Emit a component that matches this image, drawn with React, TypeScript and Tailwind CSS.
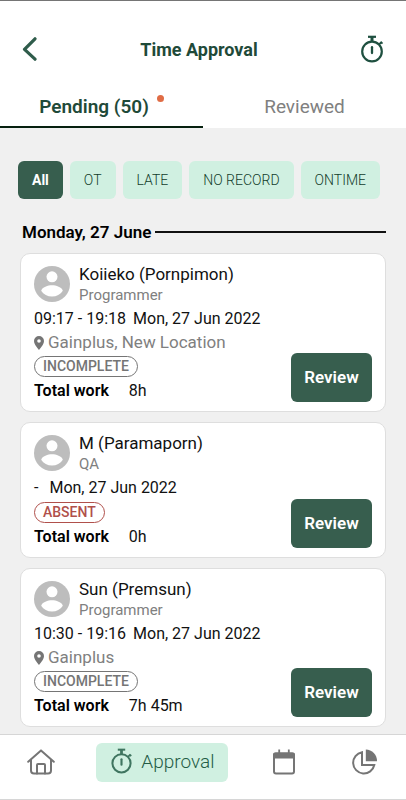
import React from "react";

type Status = "INCOMPLETE" | "ABSENT";

interface Entry {
  name: string;
  role: string;
  time: string;
  date: string;
  location?: string;
  status: Status;
  total: string;
}

const filters = ["All", "OT", "LATE", "NO RECORD", "ONTIME"];

const entries: Entry[] = [
  {
    name: "Koiieko (Pornpimon)",
    role: "Programmer",
    time: "09:17 - 19:18",
    date: "Mon, 27 Jun 2022",
    location: "Gainplus, New Location",
    status: "INCOMPLETE",
    total: "8h",
  },
  {
    name: "M (Paramaporn)",
    role: "QA",
    time: "-",
    date: "Mon, 27 Jun 2022",
    status: "ABSENT",
    total: "0h",
  },
  {
    name: "Sun (Premsun)",
    role: "Programmer",
    time: "10:30 - 19:16",
    date: "Mon, 27 Jun 2022",
    location: "Gainplus",
    status: "INCOMPLETE",
    total: "7h 45m",
  },
];

function StopwatchIcon({ className }: { className: string }) {
  return (
    <svg className={className} viewBox="0 0 24 28" fill="none" stroke="currentColor" aria-hidden="true">
      <circle cx="12" cy="16.5" r="9.8" strokeWidth="2.2" />
      <path d="M8 1.8h8" strokeWidth="2.2" />
      <path d="M12 2v4.5" strokeWidth="3" />
      <path d="M12 12.2v5.8" strokeWidth="2.3" strokeLinecap="round" />
      <path d="M19 9.5l2.400-2.400M20.500 6.800l2 1.800" strokeWidth="1.900" />
    </svg>
  );
}

function AvatarIcon() {
  return (
    <svg className="shrink-0" width="36" height="36" viewBox="0 0 36 36" aria-hidden="true">
      <circle cx="18" cy="18" r="18" fill="#bdbdbd" />
      <circle cx="18" cy="10.8" r="5.5" fill="#fff" />
      <path d="M7.2 24.8C8 21 14 19.2 18 19.2s10 1.8 10.8 5.6C26.500 28.600 22.500 30.600 18 30.600S9.500 28.600 7.200 24.800z" fill="#fff" />
    </svg>
  );
}

function PinIcon() {
  return (
    <svg className="shrink-0" width="10" height="14" viewBox="0 0 10 14" aria-hidden="true">
      <path
        d="M5 0a5 5 0 0 0-5 5c0 3.500 5 9 5 9s5-5.500 5-9a5 5 0 0 0-5-5zm0 6.800a1.800 1.800 0 1 1 0-3.600 1.800 1.800 0 0 1 0 3.600z"
        fill="#757575"
      />
    </svg>
  );
}

function HomeIcon() {
  return (
    <svg width="28" height="26" viewBox="0 0 28 26" fill="none" stroke="currentColor" strokeWidth="2" strokeLinecap="round" strokeLinejoin="round" aria-hidden="true">
      <path d="M1.200 12.800L14 1.400l12.800 11.400" />
      <path d="M4 11v10.500a3 3 0 0 0 3 3h14a3 3 0 0 0 3-3V11" />
      <path d="M10 24.500V16a1 1 0 0 1 1-1h6a1 1 0 0 1 1 1v8.500" />
    </svg>
  );
}

function CalendarIcon() {
  return (
    <svg width="22" height="26" viewBox="0 0 22 26" fill="none" stroke="currentColor" aria-hidden="true">
      <rect x="1" y="4.500" width="20" height="20" rx="2" strokeWidth="2" />
      <path d="M0 5.500a2 2 0 0 1 2-2h18a2 2 0 0 1 2 2v4H0z" fill="currentColor" stroke="none" />
      <path d="M6.200 0.500v4M15.800 0.500v4" strokeWidth="1.800" />
    </svg>
  );
}

function PieIcon() {
  return (
    <svg width="26" height="26" viewBox="0 0 26 26" fill="none" stroke="currentColor" aria-hidden="true">
      <path d="M10 3.200A10.700 10.700 0 1 0 22.300 16H10z" strokeWidth="2" />
      <path d="M13.800 0.500A11.500 11.500 0 0 1 25 12.200H13.800z" fill="currentColor" stroke="none" />
    </svg>
  );
}

function EntryCard({ entry }: { entry: Entry }) {
  const badge =
    entry.status === "ABSENT" ? "border-[#b0504b] text-[#b0504b]" : "border-[#757575] text-[#757575]";
  return (
    <article className="flex items-end justify-between rounded-[10px] border border-[#dedede] bg-white pt-3 pr-[13px] pb-[9px] pl-[13px]">
      <div className="min-w-0">
        <div className="flex h-[41px] gap-[9px]">
          <AvatarIcon />
          <div>
            <h3 className="-mt-[3px] text-[17px] leading-[22px] text-[#111]">{entry.name}</h3>
            <p className="text-[15px] leading-[20px] text-[#808080]">{entry.role}</p>
          </div>
        </div>
        <p className="flex gap-[7px] text-[16px] leading-[24px] text-[#111]">
          <span className={entry.time === "-" ? "pr-1" : ""}>{entry.time}</span>
          <span>{entry.date}</span>
        </p>
        {entry.location && (
          <p className="flex items-center gap-1 text-[17px] leading-[23px] text-[#808080]">
            <PinIcon />
            {entry.location}
          </p>
        )}
        <div className="flex h-[25px] items-center">
          <span className={`rounded-full border px-2 text-[14px] leading-[19px] font-medium ${badge}`}>
            {entry.status}
          </span>
        </div>
        <p className="flex gap-5 text-[16px] leading-[23px] text-[#111]">
          <span className="font-semibold text-black">Total work</span>
          <span>{entry.total}</span>
        </p>
      </div>
      <button type="button" className="h-[49px] w-[81px] shrink-0 rounded-md bg-[#375e4e] text-[17px] font-semibold text-white">
        Review
      </button>
    </article>
  );
}

export default function App() {
  return (
    <div className="flex min-h-screen flex-col border-t border-[#757575] bg-[#f0f0f0] font-['Roboto',sans-serif]">
      <header className="bg-white">
        <div className="flex h-[88px] items-center justify-between px-[22px] pt-2">
          <button type="button" aria-label="Back" className="text-[#2f5c4b]">
            <svg width="16" height="24" viewBox="0 0 16 24" fill="none" stroke="currentColor" strokeWidth="3.200" strokeLinecap="round" strokeLinejoin="round" aria-hidden="true">
              <path d="M13 1.800L2.500 12.300 13 22.200" />
            </svg>
          </button>
          <h1 className="text-[18px] font-bold text-[#1f4a39]">Time Approval</h1>
          <button type="button" aria-label="Timer" className="text-[#1f5040]">
            <StopwatchIcon className="h-7 w-6" />
          </button>
        </div>
        <nav className="flex" aria-label="Approval state">
          <button type="button" className="flex h-[39px] flex-1 justify-center gap-2 border-b-2 border-[#06200f] pt-[6px] text-[19px] leading-[24px] font-semibold text-[#1f4a39]">
            Pending (50)
            <span className="size-[7px] rounded-full bg-[#e06c45]" />
          </button>
          <button type="button" className="flex h-[39px] flex-1 justify-center pt-[6px] text-[19px] leading-[24px] text-[#808080]">
            Reviewed
          </button>
        </nav>
      </header>

      <main className="flex-1 px-5 pt-[33px] pb-[7px]">
        <div className="-mx-[2px] flex gap-[7px]">
          {filters.map((f, i) => (
            <button
              key={f}
              type="button"
              className={
                i === 0
                  ? "h-[38px] rounded-md bg-[#375e4e] px-[14px] text-[14px] font-bold text-white"
                  : "h-[38px] rounded-md bg-[#d0f0e1] px-[14px] text-[14px] font-light whitespace-nowrap text-[#123d2b]"
              }
            >
              {f}
            </button>
          ))}
        </div>
        <section>
          <div className="mt-[21px] flex items-center gap-1 pl-[2px]">
            <h2 className="text-[17px] leading-[24px] font-semibold text-black">Monday, 27 June</h2>
            <hr className="flex-1 border-t-2 border-[#111]" />
          </div>
          <div className="mt-[9px] flex flex-col gap-[10px]">
            {entries.map((e) => (
              <EntryCard key={e.name} entry={e} />
            ))}
          </div>
        </section>
      </main>

      <nav className="grid h-[66px] grid-cols-5 items-start border-y border-[#d6d6d6] bg-white pt-2 text-[#757575]" aria-label="Main">
        <a href="#home" aria-label="Home" className="flex h-[38px] items-center justify-center">
          <HomeIcon />
        </a>
        <a href="#approval" className="col-span-2 flex h-[39px] items-center gap-2 justify-self-center rounded-md bg-[#d0f0e1] px-[14px] text-[19px] font-light text-[#245c46]">
          <StopwatchIcon className="mb-1 h-[26px] w-[23px] text-[#3f7560]" />
          Approval
        </a>
        <a href="#calendar" aria-label="Calendar" className="flex h-[38px] items-center justify-center">
          <CalendarIcon />
        </a>
        <a href="#reports" aria-label="Reports" className="flex h-[38px] items-center justify-center">
          <PieIcon />
        </a>
      </nav>
    </div>
  );
}
